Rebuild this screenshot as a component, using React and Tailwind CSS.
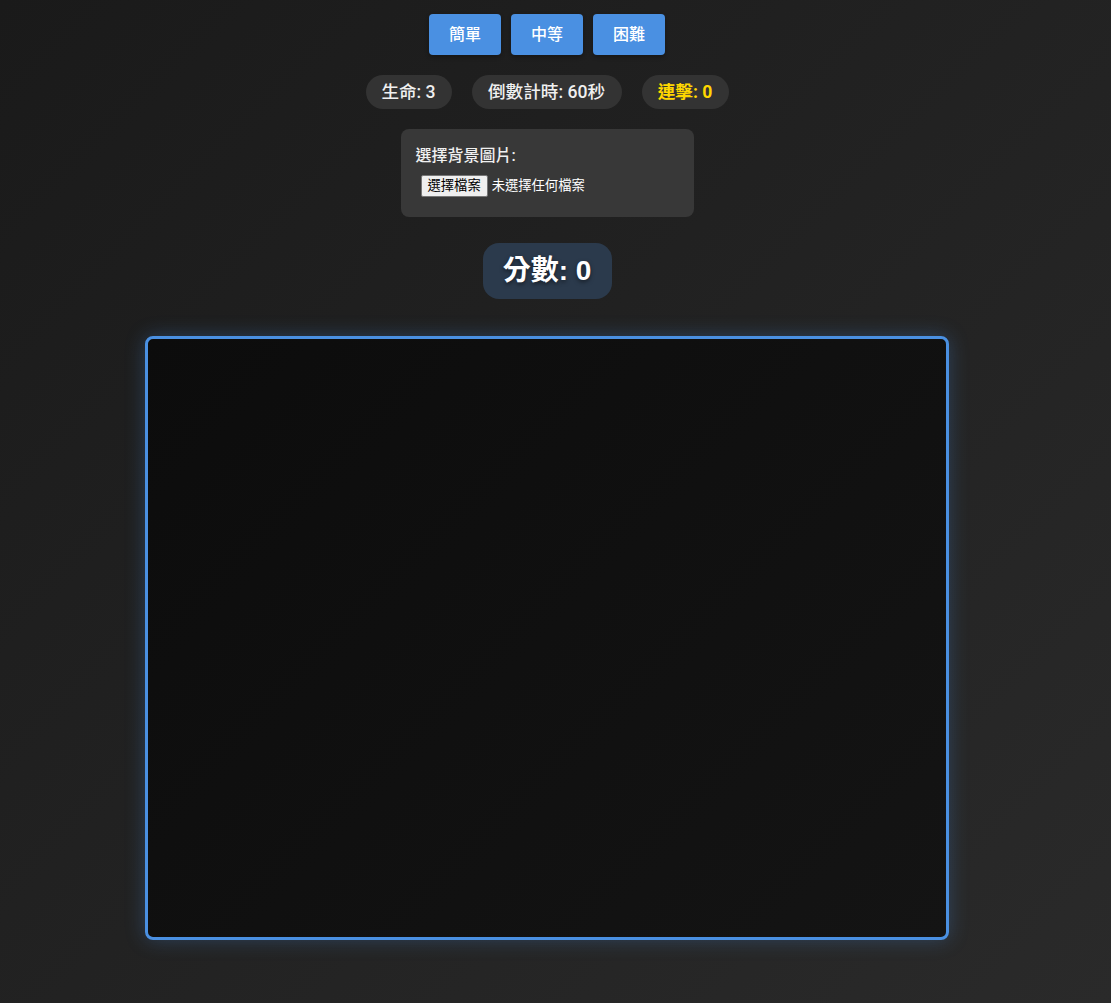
export default function App() {
  const font = { fontFamily: '"Liberation Sans", Arial, "Noto Sans CJK TC", sans-serif' };
  const med = { fontFamily: 'Roboto, "Noto Sans CJK TC", sans-serif' };
  return (
    <div
      className="w-full h-[1003px] overflow-hidden bg-[linear-gradient(135deg,#1a1a1a_0%,#2a2a2a_100%)] text-white"
      style={font}
    >
      <div className="w-[1094px] flex flex-col items-center pt-[14px]">
        <div className="flex gap-[10px]">
          {["簡單", "中等", "困難"].map((t) => (
            <button
              key={t}
              style={med}
              className="w-[72px] h-[41px] rounded-[4px] bg-[#4a90e2] text-white text-[16px] font-medium shadow-[0_2px_4px_rgba(0,0,0,0.3)]"
            >
              {t}
            </button>
          ))}
        </div>

        <div className="flex gap-[20px] mt-[20px]" style={med}>
          <div className="h-[34px] w-[86px] rounded-[17px] bg-[#333333] flex items-center justify-center text-[17.6px] font-medium text-[#f0f0f0]">
            生命: 3
          </div>
          <div className="h-[34px] w-[150px] rounded-[17px] bg-[#333333] flex items-center justify-center text-[17.6px] font-medium text-[#f0f0f0]">
            倒數計時: 60秒
          </div>
          <div className="h-[34px] w-[87px] rounded-[17px] bg-[#333333] flex items-center justify-center text-[17.6px] font-bold text-[#ffd700]">
            連擊: 0
          </div>
        </div>

        <div className="mt-[20px] w-[293px] h-[88px] rounded-[8px] bg-[#383838] pl-[15px] pt-[16px]">
          <div className="text-[16px] font-medium leading-[22px] text-[#f0f0f0]" style={med}>選擇背景圖片:</div>
          <div className="mt-[8px] ml-[5px] flex items-center gap-[4px]">
            <span className="h-[22px] px-[6px] flex items-center bg-[#efefef] border border-[#767676] rounded-[2px] text-black text-[13.3px]">
              選擇檔案
            </span>
            <span className="text-[13.3px] text-white">未選擇任何檔案</span>
          </div>
        </div>

        <div className="mt-[26px] h-[56px] w-[129px] rounded-[16px] bg-[#2b3a4c] flex items-center justify-center text-[28px] font-bold text-white [text-shadow:0_2px_4px_rgba(0,0,0,0.5)]">
          分數: 0
        </div>

        <div className="mt-[37px] w-[804px] h-[604px] rounded-[8px] border-[3px] border-[#4a90e2] bg-[linear-gradient(135deg,#0c0c0c_0%,#141414_100%)] shadow-[0_0_20px_rgba(74,144,226,0.3)]" />
      </div>
    </div>
  );
}
